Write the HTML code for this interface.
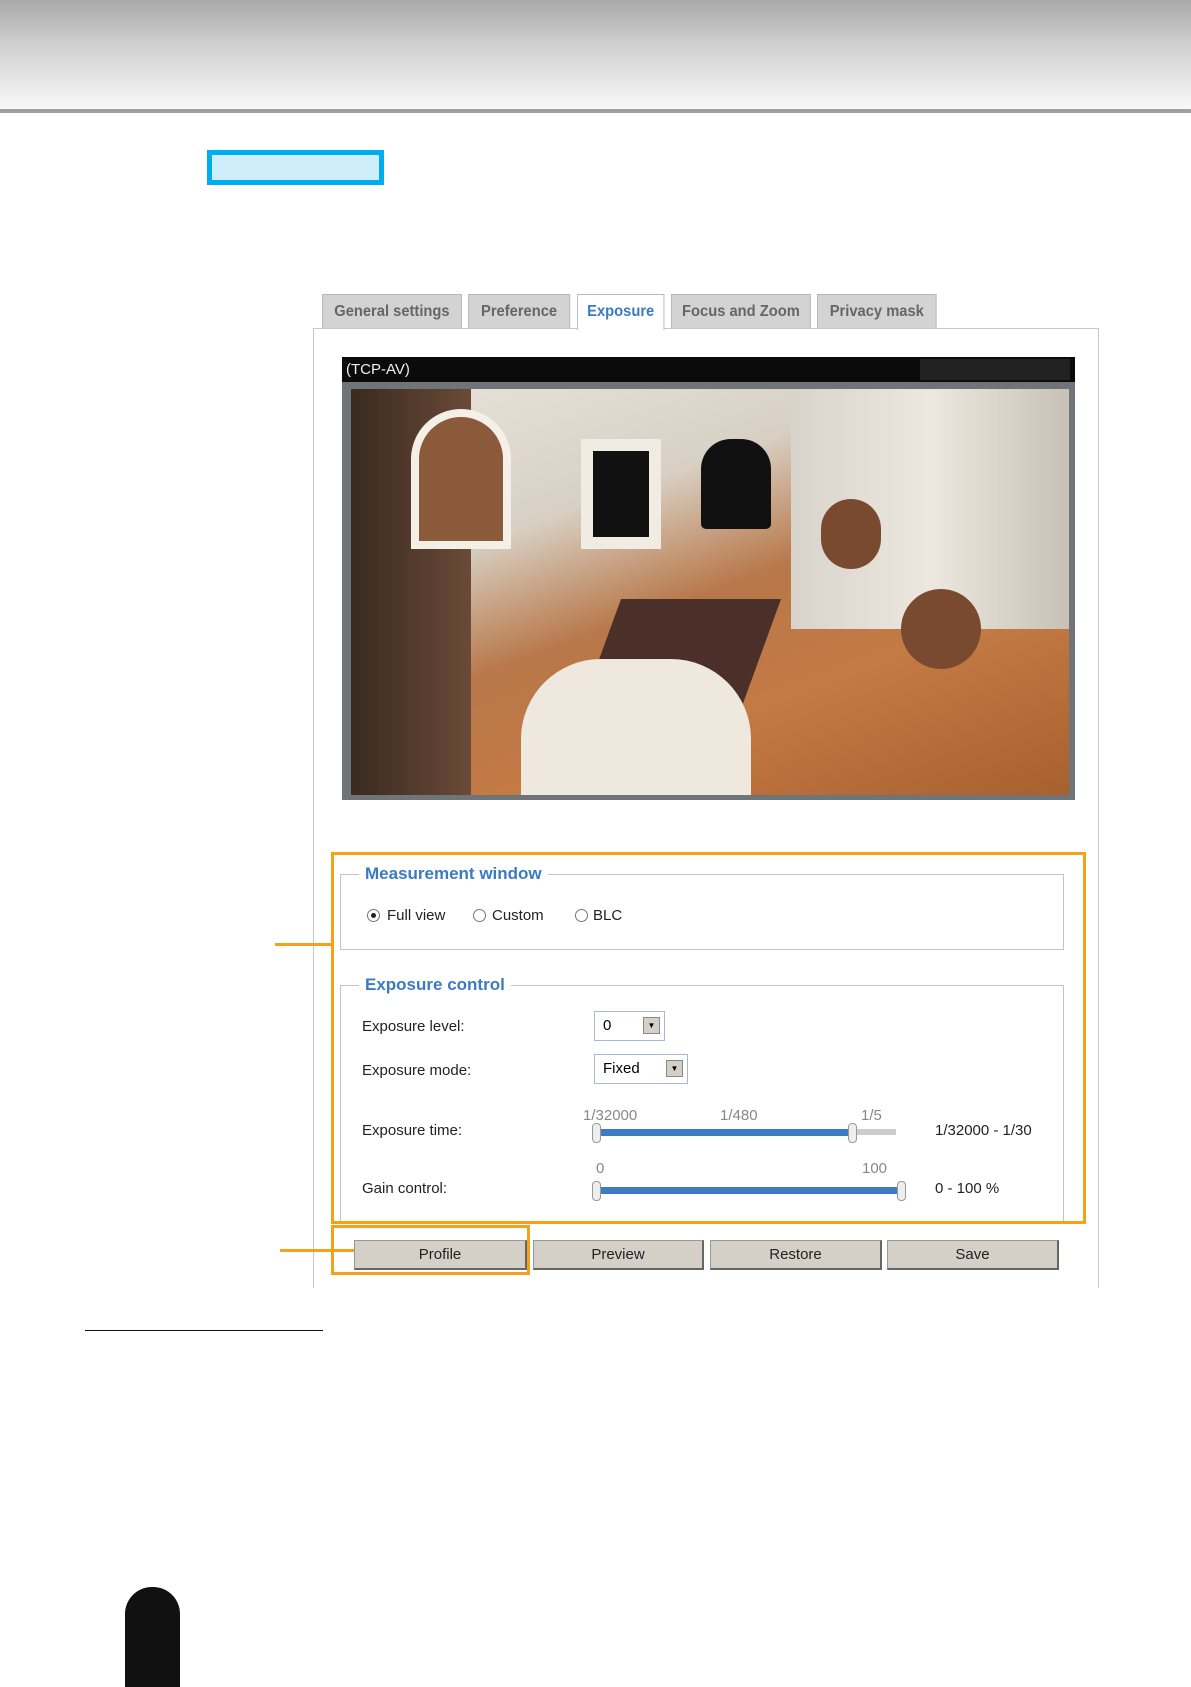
<!DOCTYPE html>
<html><head><style>
*{margin:0;padding:0;box-sizing:border-box}
body{width:1191px;height:1684px;position:relative;background:#fff;font-family:"Liberation Sans",sans-serif;overflow:hidden}
.a{position:absolute}
.tab{position:absolute;top:294px;height:34px;background:#d3d3d3;border:1px solid #b8b8b8;border-bottom:none;font-size:16px;font-weight:bold;color:#666;text-align:center;line-height:34px;transform:scaleX(.92);transform-origin:left}
.lbl{position:absolute;font-size:15px;color:#222}
.leg{position:absolute;font-size:17px;font-weight:bold;color:#3b7bc0;background:#fff;padding:0 6px}
.fs{position:absolute;border:1px solid #c4c4c4}
.radio{position:absolute;width:13px;height:13px;border:1px solid #777;border-radius:50%;background:#fff}
.sel{position:absolute;border:1px solid #a8b8d0;background:#fff;font-size:15px;padding-left:8px}
.sel i{position:absolute;right:4px;top:5px;width:17px;height:17px;background:#d4d0c8;border:1px solid #888;font-style:normal;font-size:8px;text-align:center;line-height:16px}
.btn{position:absolute;top:1240px;height:30px;background:#d4d0c8;border:1px solid #999;border-right:2px solid #666;border-bottom:2px solid #666;font-size:15px;text-align:center;line-height:28px;color:#222}
.or{position:absolute;background:#f7a11a}
</style></head><body>
<div class="a" style="left:0;top:0;width:1191px;height:111px;background:linear-gradient(#a9a9a9,#cfcfcf 40%,#f3f3f3 90%,#fafafa)"></div>
<div class="a" style="left:0;top:109px;width:1191px;height:4px;background:#a0a0a0"></div>
<div class="a" style="left:207px;top:150px;width:177px;height:35px;background:#cdeefa;border:5px solid #00aeef"></div>

<div class="a" style="left:313px;top:328px;width:786px;height:960px;border:1px solid #c8c8c8;border-bottom:none"></div>
<div class="tab" style="left:322px;width:152px">General settings</div>
<div class="tab" style="left:468px;width:111px">Preference</div>
<div class="tab" style="left:577px;width:95px;background:#fff;color:#3b7bc0;height:36px">Exposure</div>
<div class="tab" style="left:671px;width:152px">Focus and Zoom</div>
<div class="tab" style="left:817px;width:130px">Privacy mask</div>

<div class="a" style="left:342px;top:357px;width:733px;height:443px;background:#6f7478"></div>
<div class="a" style="left:342px;top:357px;width:733px;height:25px;background:#0b0b0b;color:#eee;font-size:15px;line-height:25px;padding-left:4px">(TCP-AV)</div>
<div class="a" style="left:920px;top:359px;width:150px;height:21px;background:#222"></div>
<div class="a" style="left:351px;top:389px;width:718px;height:406px;overflow:hidden;background:linear-gradient(160deg,#e8e4dc 0%,#d8d0c4 30%,#b8784a 50%,#c47a44 70%,#a8602e 100%)">
 <div class="a" style="left:0;top:0;width:120px;height:406px;background:linear-gradient(90deg,#3a2a20,#6a4a38)"></div>
 <div class="a" style="left:60px;top:20px;width:100px;height:140px;background:#8a5a3a;border-radius:50px 50px 0 0;border:8px solid #f4f0e8"></div>
 <div class="a" style="left:230px;top:50px;width:80px;height:110px;background:#111;border:12px solid #f0ece4"></div>
 <div class="a" style="left:350px;top:50px;width:70px;height:90px;background:#111;border-radius:30px 30px 5px 5px"></div>
 <div class="a" style="left:440px;top:0;width:280px;height:240px;background:linear-gradient(90deg,#d8d4cc,#ece8e0,#c8c0b4)"></div>
 <div class="a" style="left:470px;top:110px;width:60px;height:70px;background:#7a4a30;border-radius:30px"></div>
 <div class="a" style="left:550px;top:200px;width:80px;height:80px;background:#7a4a30;border-radius:40px"></div>
 <div class="a" style="left:250px;top:210px;width:160px;height:110px;background:#4a3028;transform:skewX(-20deg)"></div>
 <div class="a" style="left:170px;top:270px;width:230px;height:150px;background:#eee8de;border-radius:80px 80px 0 0"></div>
</div>

<div class="fs" style="left:340px;top:874px;width:724px;height:76px"></div>
<div class="leg" style="left:359px;top:864px">Measurement window</div>
<div class="radio" style="left:367px;top:909px"><div class="a" style="left:3px;top:3px;width:5px;height:5px;background:#222;border-radius:50%"></div></div>
<div class="lbl" style="left:387px;top:907px">Full view</div>
<div class="radio" style="left:473px;top:909px"></div>
<div class="lbl" style="left:492px;top:907px">Custom</div>
<div class="radio" style="left:575px;top:909px"></div>
<div class="lbl" style="left:593px;top:907px">BLC</div>

<div class="fs" style="left:340px;top:985px;width:724px;height:237px"></div>
<div class="leg" style="left:359px;top:975px">Exposure control</div>
<div class="lbl" style="left:362px;top:1018px">Exposure level:</div>
<div class="sel" style="left:594px;top:1011px;width:71px;height:30px;line-height:28px">0<i>▼</i></div>
<div class="lbl" style="left:362px;top:1062px">Exposure mode:</div>
<div class="sel" style="left:594px;top:1054px;width:94px;height:30px;line-height:28px">Fixed<i>▼</i></div>
<div class="lbl" style="left:362px;top:1122px">Exposure time:</div>
<div class="lbl" style="left:583px;top:1107px;color:#888">1/32000</div>
<div class="lbl" style="left:720px;top:1107px;color:#888">1/480</div>
<div class="lbl" style="left:861px;top:1107px;color:#888">1/5</div>
<div class="a" style="left:596px;top:1129px;width:300px;height:6px;background:#ccc"></div>
<div class="a" style="left:598px;top:1129px;width:256px;height:7px;background:#3d7cc4"></div>
<div class="a" style="left:592px;top:1123px;width:9px;height:20px;background:#eee;border:1px solid #999;border-radius:4px"></div>
<div class="a" style="left:848px;top:1123px;width:9px;height:20px;background:#eee;border:1px solid #999;border-radius:4px"></div>
<div class="lbl" style="left:935px;top:1122px">1/32000 - 1/30</div>
<div class="lbl" style="left:362px;top:1180px">Gain control:</div>
<div class="lbl" style="left:596px;top:1160px;color:#888">0</div>
<div class="lbl" style="left:862px;top:1160px;color:#888">100</div>
<div class="a" style="left:598px;top:1187px;width:304px;height:7px;background:#3d7cc4"></div>
<div class="a" style="left:592px;top:1181px;width:9px;height:20px;background:#eee;border:1px solid #999;border-radius:4px"></div>
<div class="a" style="left:897px;top:1181px;width:9px;height:20px;background:#eee;border:1px solid #999;border-radius:4px"></div>
<div class="lbl" style="left:935px;top:1180px">0 - 100 %</div>

<div class="btn" style="left:354px;width:173px">Profile</div>
<div class="btn" style="left:533px;width:171px">Preview</div>
<div class="btn" style="left:710px;width:172px">Restore</div>
<div class="btn" style="left:887px;width:172px">Save</div>

<div class="a" style="left:331px;top:852px;width:755px;height:372px;border:3px solid #f7a11a"></div>
<div class="a" style="left:331px;top:1225px;width:199px;height:50px;border:3px solid #f7a11a"></div>
<div class="or" style="left:275px;top:943px;width:57px;height:3px"></div>
<div class="or" style="left:280px;top:1249px;width:74px;height:3px"></div>

<div class="a" style="left:85px;top:1330px;width:238px;height:1px;background:#111"></div>
<div class="a" style="left:125px;top:1587px;width:55px;height:100px;background:#111;border-radius:27px 27px 0 0"></div>
</body></html>
